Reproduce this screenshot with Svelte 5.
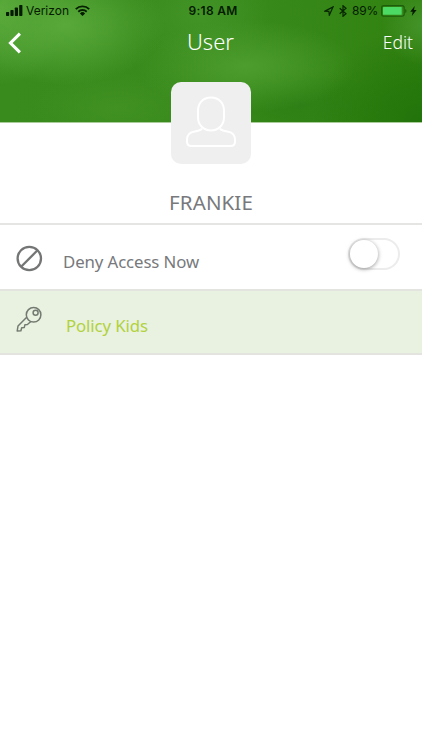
<script lang="ts">
  let name = "FRANKIE";
  let battery = 89;
  let denied = false;

  const toggle = () => {
    denied = !denied;
  };
</script>

<div class="screen">
  <header>
    <div class="status">
      <div class="carrier">
        <svg width="17" height="11" viewBox="0 0 17 11">
          <rect x="0" y="7" width="3.2" height="4" rx="0.7" />
          <rect x="4.4" y="5" width="3.2" height="6" rx="0.7" />
          <rect x="8.8" y="2.5" width="3.2" height="8.5" rx="0.7" />
          <rect x="13.2" y="0" width="3.2" height="11" rx="0.7" />
        </svg>
        <span class="provider">Verizon</span>
        <svg class="wifi" width="15" height="11" viewBox="0 0 15 11">
          <g fill="none" stroke="#062000" stroke-width="1.9">
            <path d="M0.8 4.1a9.5 9.5 0 0 1 13.4 0" />
            <path d="M3.3 6.7a6 6 0 0 1 8.4 0" />
          </g>
          <path d="M4.9 8.4a3.7 3.7 0 0 1 5.2 0L7.5 11z" />
        </svg>
      </div>
      <span class="time">9:18 AM</span>
      <div class="power">
        <svg width="10" height="10" viewBox="0 0 10 10">
          <path d="M0.9 5.1 9 0.9 5.3 9.2 4.9 5.3z" fill="none" stroke="#082500" stroke-width="1.200" />
        </svg>
        <svg class="bluetooth" width="8" height="12" viewBox="0 0 8 12">
          <path d="M0.7 3.2 7 8.7 4 11.3V0.7L7 3.3 0.7 8.8" fill="none" stroke="#082500" stroke-width="1.2" />
        </svg>
        <span class="percent">{battery}%</span>
        <svg class="battery" width="26" height="12" viewBox="0 0 26 12">
          <rect x="0.6" y="0.6" width="22.6" height="10.6" rx="2.2" fill="none" stroke="#1c5c0b" stroke-width="1.1" />
          <rect x="2" y="2" width={(battery / 100) * 21} height="7.8" rx="0.6" fill="#4cd964" />
          <path d="M24.2 4a2.2 2.2 0 0 1 0 4z" fill="#1c5c0b" />
        </svg>
        <svg class="bolt" width="7" height="10" viewBox="0 0 7 10">
          <path d="M4.7 0 0.2 5.7h2.5L1.8 10l4.8-6H4z" />
        </svg>
      </div>
    </div>
    <nav>
      <button class="back" aria-label="Back">
        <svg width="14" height="22" viewBox="0 0 14 22">
          <path d="M11.9 1.7 2.5 11l9.4 9.3" fill="none" stroke="#fff" stroke-width="3.1" />
        </svg>
      </button>
      <h1>User</h1>
      <button class="edit">Edit</button>
    </nav>
  </header>

  <section class="profile">
    <div class="avatar">
      <svg width="50" height="52" viewBox="0 0 50 52" fill="none" stroke="#fff" stroke-width="2">
        <path d="M25 1.500c-8.200 0-13 5.800-13 13.300v6.400C12 29 17.500 34.500 25 34.500S38 29 38 21.200v-6.400C38 7.300 33.200 1.500 25 1.500z" />
        <path d="M16 32.800c-1.600 1.600-4 2.200-7.200 2.600C3.500 36.200 1 39 1 43.500v2C1 48.500 2.500 50 5.500 50h39c3 0 4.500-1.500 4.500-4.500v-2c0-4.500-2.500-7.300-7.800-8.100-3.200-.4-5.600-1-7.200-2.600" />
      </svg>
    </div>
    <h2>{name}</h2>
  </section>

  <div class="row deny">
    <svg class="icon" width="27" height="27" viewBox="0 0 27 27" fill="none" stroke="#747575" stroke-width="2.300">
      <circle cx="13.300" cy="13.500" r="11.700" />
      <path d="M5.100 21.700 21.500 5.300" />
    </svg>
    <span class="label">Deny Access Now</span>
    <button class="switch" class:on={denied} role="switch" aria-checked={denied} aria-label="Deny Access Now" on:click={toggle}>
      <span class="thumb"></span>
    </button>
  </div>

  <div class="row policy">
    <svg class="icon" width="27" height="27" viewBox="0 0 27 27" fill="none" stroke="#747a72" stroke-width="1.500" stroke-linejoin="round">
      <circle cx="17.600" cy="8.800" r="7.300" />
      <circle cx="19.600" cy="6.700" r="2.500" />
      <path d="M10.700 11.300 2 20l-.8 5 3.700-.3.800-3 2.600-.3.600-2.600 2.500-.3 3.500-3" />
    </svg>
    <span class="label">Policy Kids</span>
  </div>
</div>

<style>
  :global(body) {
    margin: 0;
    background: #fff;
  }

  .screen {
    width: 422px;
    height: 750px;
    overflow: hidden;
    background: #fff;
    font-family: "Noto Sans", "Open Sans", sans-serif;
  }

  button {
    padding: 0;
    border: 0;
    background: none;
    font: inherit;
  }

  svg {
    display: block;
    flex: none;
  }

  header {
    height: 123px;
    border-bottom: 1px solid #a9cc9a;
    box-sizing: border-box;
    background:
      radial-gradient(ellipse 100px 60px at 65px 25px, #58a93a, #58a93a99 45%, #58a93a00),
      radial-gradient(ellipse 70px 75px at 0 10px, #5aab3c, #5aab3c00),
      radial-gradient(ellipse 110px 46px at 245px 66px, #4c9d2e, #4c9d2e99 40%, #4c9d2e00),
      radial-gradient(ellipse 70px 50px at 200px 15px, #439427, #43942700),
      radial-gradient(ellipse 85px 36px at 115px 108px, #409122, #40912200),
      radial-gradient(ellipse 40px 40px at 422px 25px, #44932a, #44932a00),
      radial-gradient(ellipse 110px 95px at 422px 122px, #22730a, #22730a00),
      radial-gradient(ellipse 80px 36px at 300px 105px, #2e7f15, #2e7f1500),
      linear-gradient(100deg, #3a8b1e, #388a1b 55%, #30810f);
  }

  .status {
    height: 21px;
    display: grid;
    grid-template-columns: 1fr auto 1fr;
    align-items: center;
    padding: 0 5px 0 6px;
    color: #061b00;
    font-family: Inter, Roboto, sans-serif;
    font-size: 12px;
    line-height: 20px;
    fill: #061b00;
  }

  .carrier,
  .power {
    display: flex;
    align-items: center;
  }

  .provider {
    margin-left: 3px;
  }

  .wifi {
    margin-left: 6px;
  }

  .time {
    padding-left: 3px;
    font-weight: 600;
    letter-spacing: 0.3px;
  }

  .power {
    justify-content: flex-end;
  }

  .bluetooth {
    margin-left: 5px;
  }

  .percent {
    margin: 0 3px 0 5px;
    letter-spacing: -0.2px;
  }

  .bolt {
    margin-left: 3px;
  }

  nav {
    height: 42px;
    display: grid;
    grid-template-columns: 1fr auto 1fr;
    align-items: center;
    padding: 0 9px 0 8px;
    color: #fff;
  }

  .back {
    justify-self: start;
    margin-top: 2px;
  }

  h1 {
    margin: 0;
    font-size: 22px;
    font-weight: 300;
    line-height: 40px;
    margin-bottom: 2px;
  }

  .edit {
    justify-self: end;
    color: #fff;
    font-size: 17.5px;
    font-weight: 300;
    line-height: 42px;
  }

  .profile {
    height: 100px;
    display: flex;
    flex-direction: column;
    align-items: center;
    border-bottom: 2px solid #e5e5e3;
  }

  .avatar {
    width: 80px;
    height: 82px;
    flex: none;
    margin-top: -41px;
    display: flex;
    align-items: center;
    justify-content: center;
    border-radius: 10px;
    background: #efefef;
  }

  .avatar svg {
    margin-top: -2px;
  }

  h2 {
    margin: 23px 0 0;
    color: #77797c;
    font-size: 20.5px;
    font-weight: 400;
    line-height: 30px;
    letter-spacing: 0.1px;
  }

  .row {
    box-sizing: border-box;
    display: flex;
    align-items: center;
    padding: 0 22px 0 16px;
    border-bottom: 2px solid #e3e4df;
  }

  .deny {
    height: 66px;
  }

  .deny .icon {
    margin-top: 2px;
  }

  .label {
    margin: 9px 0 0 20px;
    color: #77797c;
    font-size: 16.8px;
    line-height: 24px;
    letter-spacing: -0.1px;
  }

  .policy {
    height: 64px;
    background: #e9f2e1;
  }

  .policy .icon {
    margin-bottom: 6px;
  }

  .policy .label {
    margin: 7px 0 0 23px;
    color: #b1d13d;
  }

  .switch {
    width: 52px;
    height: 32px;
    margin: -6px 0 0 auto;
    box-sizing: border-box;
    border: 2px solid #ececec;
    border-radius: 16px;
    background: #fff;
  }

  .switch.on {
    background: #b1d13d;
  }

  .thumb {
    display: block;
    width: 28px;
    height: 28px;
    border-radius: 50%;
    background: #fff;
    box-shadow: 0 1px 4px #0006;
  }

  .on .thumb {
    margin-left: auto;
  }
</style>
